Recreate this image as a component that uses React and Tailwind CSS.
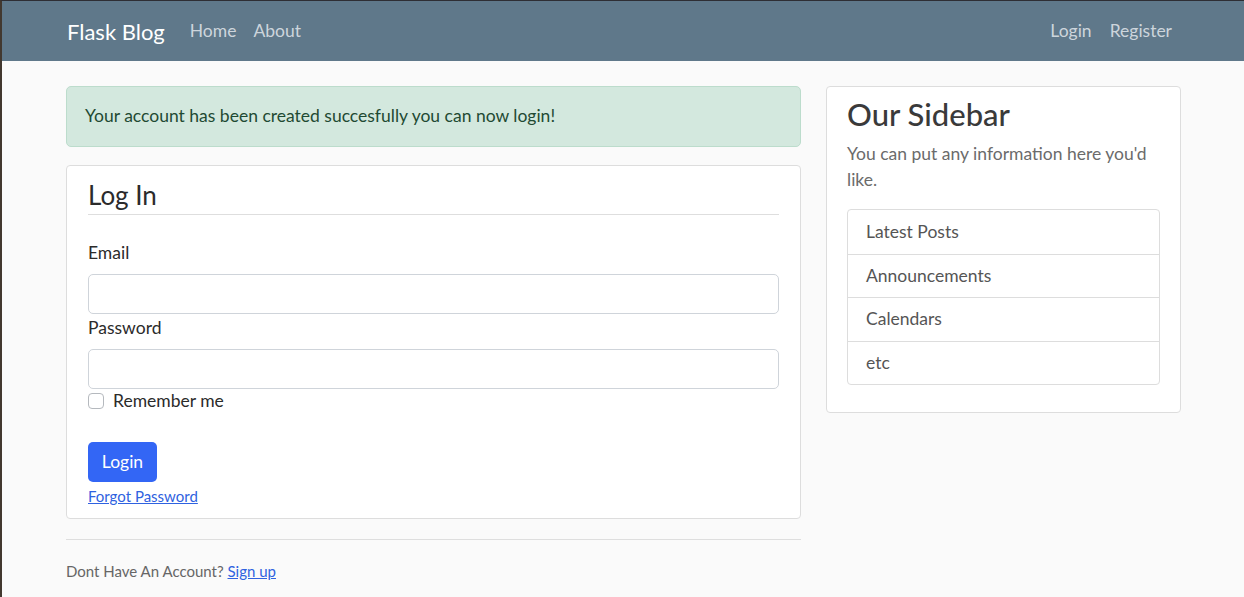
export default function App() {
  const links = ["Latest Posts", "Announcements", "Calendars", "etc"];

  return (
    <div className="min-h-[597px] border-t border-t-[#2e2e34] border-l-2 border-l-[#42382f] bg-[#fafafa] font-['Lato',sans-serif] text-[#333]">
      <nav className="flex h-[60px] items-center bg-[#5f788a] pl-[65px] pr-[72px]">
        <span className="text-[22px] text-white">Flask Blog</span>
        <div className="ml-[25px] flex gap-[17px] text-[17.5px] text-[#cdd5dc]">
          <span>Home</span>
          <span>About</span>
        </div>
        <div className="ml-auto flex gap-[18px] text-[17.5px] text-[#cdd5dc]">
          <span>Login</span>
          <span>Register</span>
        </div>
      </nav>

      <main className="flex items-start gap-[25px] pl-[64px] pt-[25px]">
        <div className="w-[735px]">
          <div className="flex h-[61px] items-center rounded-[5px] border border-[#bcdccc] bg-[#d3e8de] px-[18px] text-[17.5px] text-[#1f4a33]">
            Your account has been created succesfully you can now login!
          </div>

          <div className="mt-[18px] rounded-[4px] border border-[#dddddd] bg-white px-[21px] pb-[11px] pt-[14px]">
            <div className="border-b border-[#dedede] pb-[3px] text-[26px] leading-[31px] text-[#2b2b2b]">Log In</div>

            <label className="mt-[26px] block text-[17.5px] leading-[24px] text-[#2b2b2b]">Email</label>
            <input type="text" className="mt-[9px] block h-[40px] w-full rounded-[5px] border border-[#cfd4da] bg-white" />

            <label className="mt-[2px] block text-[17.5px] leading-[24px] text-[#2b2b2b]">Password</label>
            <input type="password" className="mt-[9px] block h-[40px] w-full rounded-[5px] border border-[#cfd4da] bg-white" />

            <div className="flex h-[24px] items-center gap-[9px] text-[17.5px] text-[#2b2b2b]">
              <span className="h-[16px] w-[16px] rounded-[4px] border border-[#b5b9be] bg-white"></span>
              <span>Remember me</span>
            </div>

            <button className="mt-[29px] flex h-[40px] w-[69px] items-center justify-center rounded-[5px] bg-[#3366f5] text-[17.5px] text-white">
              Login
            </button>
            <a className="mt-[4px] block text-[15px] leading-[21px] text-[#2f62e0] underline">Forgot Password</a>
          </div>

          <div className="mt-[20px] border-t border-[#dedede]"></div>
          <p className="mt-[21px] text-[15px] leading-[21px] text-[#666]">
            Dont Have An Account? <a className="text-[#2f62e0] underline">Sign up</a>
          </p>
        </div>

        <aside className="w-[355px] rounded-[4px] border border-[#dddddd] bg-white px-[20px] pb-[27px] pt-[8px]">
          <h3 className="text-[31px] font-medium leading-[38px] text-[#3a3a3a]">Our Sidebar</h3>
          <p className="mt-[8px] text-[17.5px] leading-[26px] text-[#6b6b6b]">
            You can put any information here you'd like.
          </p>
          <ul className="mt-[16px] overflow-hidden rounded-[4px] border border-[#dddddd]">
            {links.map((item, i) => (
              <li
                key={item}
                className={`flex h-[43.5px] items-center px-[18px] text-[17.5px] text-[#555] ${i > 0 ? "border-t border-[#dddddd]" : ""}`}
              >
                {item}
              </li>
            ))}
          </ul>
        </aside>
      </main>
    </div>
  );
}
